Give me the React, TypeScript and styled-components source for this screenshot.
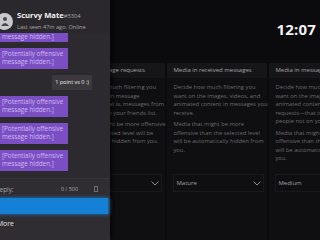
import React from "react";
import styled, { createGlobalStyle } from "styled-components";

const GlobalStyle = createGlobalStyle`
  body {
    margin: 0;
    padding: 0;
    background: #0b0a0c;
    font-family: "Open Sans", "Noto Sans", sans-serif;
    overflow: hidden;
  }
`;

const Screen = styled.div`
  position: relative;
  width: 320px;
  height: 240px;
  overflow: hidden;
  background: #0b0a0c;
`;

const TopBar = styled.div`
  height: 63px;
  display: flex;
  justify-content: flex-end;
  align-items: flex-start;
  padding: 19px 4px 0 0;
  box-sizing: border-box;
`;

const Clock = styled.div`
  color: #f2f2f2;
  font-size: 15px;
  font-weight: 700;
  letter-spacing: 0.2px;
`;

const Columns = styled.div`
  display: flex;
  gap: 2px;
  margin-left: 68px;
`;

const Column = styled.div`
  flex: 0 0 96px;
  height: 177px;
  background: #0f0e10;
  display: flex;
  flex-direction: column;
`;

const ColumnHeader = styled.div`
  height: 15px;
  flex: 0 0 15px;
  background: #161517;
  color: #a3a3a5;
  font-size: 6px;
  line-height: 15px;
  padding: 0 6px;
  white-space: nowrap;
  overflow: hidden;
`;

const ColumnBody = styled.div`
  flex: 0 0 93px;
  padding: 5px 0 0 6px;
  box-sizing: border-box;
  color: #6c6b6e;
  font-size: 5.8px;
  line-height: 8.6px;
  white-space: nowrap;
`;

const Para = styled.p`
  margin: 0 0 2.6px;
`;

const Dropdown = styled.div`
  margin: 3px 3px 0 6px;
  height: 16px;
  display: flex;
  align-items: center;
  justify-content: space-between;
  color: #a2a2a4;
  font-size: 6px;
  border: 1px solid #19181b;
  padding: 0 2px 0 2px;
`;

const Panel = styled.div`
  position: absolute;
  left: -7px;
  top: 0;
  width: 117px;
  height: 240px;
  background: #2c2a2e;
  box-shadow: 2px 0 6px rgba(0, 0, 0, 0.7);
  display: flex;
  flex-direction: column;
`;

const PanelHeader = styled.div`
  height: 33px;
  flex: 0 0 33px;
  display: flex;
  align-items: center;
  gap: 4px;
  padding: 9px 0 0 3px;
  box-sizing: border-box;
  background: #2a282c;
`;

const Avatar = styled.div`
  width: 17px;
  height: 17px;
  border-radius: 50%;
  background: #c9c8cc;
  display: flex;
  align-items: center;
  justify-content: center;
`;

const NameBlock = styled.div`
  display: flex;
  flex-direction: column;
  gap: 2px;
`;

const Name = styled.div`
  color: #f4f4f4;
  font-size: 7.6px;
  font-weight: 700;
  line-height: 9px;
  white-space: nowrap;
`;

const Tag = styled.span`
  color: #a6a5a8;
  font-size: 5.8px;
  font-weight: 400;
`;

const Status = styled.div`
  color: #a6a5a8;
  font-size: 5.6px;
  line-height: 8px;
  white-space: nowrap;
`;

const MessageList = styled.div`
  flex: 1;
  overflow: hidden;
  display: flex;
  flex-direction: column;
  gap: 6px;
`;

const Bubble = styled.div<{ mine?: boolean; clipped?: boolean }>`
  align-self: ${(p) => (p.mine ? "flex-end" : "flex-start")};
  margin: ${(p) => (p.mine ? "0 18px 0 0" : "0 0 0 5px")};
  width: ${(p) => (p.mine ? "auto" : "70px")};
  height: ${(p) => (p.mine ? "15px" : p.clipped ? "9px" : "21px")};
  flex: 0 0 auto;
  box-sizing: border-box;
  padding: ${(p) => (p.mine ? "0 3px" : p.clipped ? "0 4px" : "2px 4px")};
  background: ${(p) => (p.mine ? "#3b393d" : "#7b4ec4")};
  color: ${(p) => (p.mine ? "#ececec" : "#cdbcf2")};
  font-size: ${(p) => (p.mine ? "5.5px" : "6.3px")};
  line-height: ${(p) => (p.mine ? "15px" : "8.4px")};
  white-space: nowrap;
`;

const ReplyArea = styled.div`
  flex: 0 0 62px;
  background: #2f2d31;
  border-top: 1px solid #363438;
  display: flex;
  flex-direction: column;
  padding-top: 4px;
  box-sizing: border-box;
`;

const ReplyRow = styled.div`
  height: 12px;
  display: flex;
  align-items: center;
  padding: 0 12px 0 3px;
  color: #a9a8ab;
  font-size: 6.2px;
`;

const Counter = styled.span`
  margin-left: auto;
  margin-right: 16px;
  font-size: 5.4px;
`;

const ReplyInput = styled.div`
  margin-top: 3px;
  height: 16px;
  margin-right: 2px;
  background: #1581d6;
  box-shadow: 1px 0 4px rgba(30, 140, 230, 0.8);
`;

const MoreLink = styled.div`
  color: #e4e4e4;
  font-size: 6.8px;
  padding: 5px 0 0 4px;
`;

const Chevron = () => (
  <svg width="8" height="5" viewBox="0 0 8 5">
    <path d="M0.5 0.5 L4 4 L7.5 0.5" stroke="#8f8f91" strokeWidth="1" fill="none" />
  </svg>
);

const columns = [
  {
    title: "Text in message requests",
    paras: [
      [
        "Decide how much filtering you",
        "want on text in message",
        "requests\u2014that is, messages from",
        "people not on your friends list.",
      ],
      [
        "Text that might be more offensive",
        "than the selected level will be",
        "automatically hidden from you.",
      ],
    ],
    value: "Mature",
  },
  {
    title: "Media in received messages",
    paras: [
      [
        "Decide how much filtering you",
        "want on the images, videos, and",
        "animated content in messages you",
        "receive.",
      ],
      [
        "Media that might be more",
        "offensive than the selected level",
        "will be automatically hidden from",
        "you.",
      ],
    ],
    value: "Mature",
  },
  {
    title: "Media in message requests",
    paras: [
      [
        "Decide how much filtering you",
        "want on the images, videos, and",
        "animated content in message",
        "requests\u2014that is, messages from",
        "people not on your friends list.",
      ],
      [
        "Media that might be more",
        "offensive than the selected level",
        "will be automatically hidden from",
        "you.",
      ],
    ],
    value: "Medium",
  },
];

const Hidden = () => (
  <Bubble>
    [Potentially offensive
    <br />
    message hidden.]
  </Bubble>
);

export default function App() {
  return (
    <>
      <GlobalStyle />
      <Screen>
        <TopBar>
          <Clock>12:07</Clock>
        </TopBar>
        <Columns>
          {columns.map((c) => (
            <Column key={c.title}>
              <ColumnHeader>{c.title}</ColumnHeader>
              <ColumnBody>
                {c.paras.map((lines, i) => (
                  <Para key={i}>
                    {lines.map((l, j) => (
                      <React.Fragment key={j}>
                        {l}
                        {j < lines.length - 1 && <br />}
                      </React.Fragment>
                    ))}
                  </Para>
                ))}
              </ColumnBody>
              <Dropdown>
                <span>{c.value}</span>
                <Chevron />
              </Dropdown>
            </Column>
          ))}
        </Columns>

        <Panel>
          <PanelHeader>
            <Avatar>
              <svg width="10" height="10" viewBox="0 0 10 10">
                <circle cx="5" cy="3" r="2" fill="#4a4950" />
                <path d="M1 10 Q5 4 9 10 Z" fill="#4a4950" />
              </svg>
            </Avatar>
            <NameBlock>
              <Name>
                Scurvy Mate<Tag>#5304</Tag>
              </Name>
              <Status>Last seen 47m ago. Online</Status>
            </NameBlock>
          </PanelHeader>
          <MessageList>
            <Bubble clipped>message hidden.]</Bubble>
            <Hidden />
            <Bubble mine>1 point vs 0 :)</Bubble>
            <Hidden />
            <Hidden />
            <Hidden />
          </MessageList>
          <ReplyArea>
            <ReplyRow>
              <span>Reply:</span>
              <Counter>0 / 500</Counter>
              <svg width="4" height="6" viewBox="0 0 4 6">
                <rect x="0.5" y="0.5" width="3" height="5" stroke="#6d6c70" fill="none" />
              </svg>
            </ReplyRow>
            <ReplyInput />
            <MoreLink>More</MoreLink>
          </ReplyArea>
        </Panel>
      </Screen>
    </>
  );
}
